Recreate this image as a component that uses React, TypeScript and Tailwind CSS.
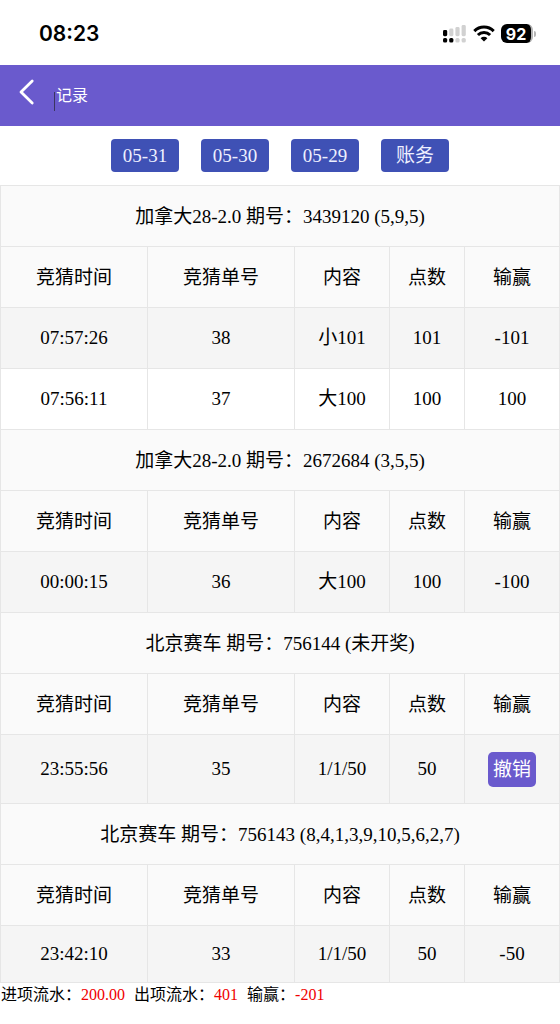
import React from 'react';

interface Bet {
  time: string;
  orderNo: string;
  content: string;
  points: string;
  result: string;
  cancellable?: boolean;
}

interface Round {
  title: string;
  bets: Bet[];
}

const filters = ['05-31', '05-30', '05-29', '账务'];

const columns = ['竞猜时间', '竞猜单号', '内容', '点数', '输赢'];

const rounds: Round[] = [
  {
    title: '加拿大28-2.0 期号：3439120 (5,9,5)',
    bets: [
      { time: '07:57:26', orderNo: '38', content: '小101', points: '101', result: '-101' },
      { time: '07:56:11', orderNo: '37', content: '大100', points: '100', result: '100' },
    ],
  },
  {
    title: '加拿大28-2.0 期号：2672684 (3,5,5)',
    bets: [{ time: '00:00:15', orderNo: '36', content: '大100', points: '100', result: '-100' }],
  },
  {
    title: '北京赛车 期号：756144 (未开奖)',
    bets: [{ time: '23:55:56', orderNo: '35', content: '1/1/50', points: '50', result: '', cancellable: true }],
  },
  {
    title: '北京赛车 期号：756143 (8,4,1,3,9,10,5,6,2,7)',
    bets: [{ time: '23:42:10', orderNo: '33', content: '1/1/50', points: '50', result: '-50' }],
  },
];

const totals = [
  { label: '进项流水：', value: '200.00' },
  { label: '出项流水：', value: '401' },
  { label: '输赢：', value: '-201' },
];

// Dual SIM signal: bars on top, dots of the second line below
const SignalIcon = () => (
  <svg width="24" height="18" viewBox="0 0 24 18" aria-hidden="true">
    <rect x="0" y="5" width="4.2" height="6.2" rx="1.4" fill="#000" />
    <rect x="6.2" y="3.6" width="4.2" height="7.6" rx="1.4" fill="#d1d1d1" />
    <rect x="12.4" y="2" width="4.2" height="9.2" rx="1.4" fill="#d1d1d1" />
    <rect x="18.6" y="0" width="4.2" height="11.2" rx="1.4" fill="#d1d1d1" />
    <rect x="0" y="13" width="4.2" height="4.6" rx="1.6" fill="#000" />
    <rect x="6.2" y="13" width="4.2" height="4.6" rx="1.6" fill="#000" />
    <rect x="12.4" y="13" width="4.2" height="4.6" rx="1.6" fill="#d1d1d1" />
    <rect x="18.6" y="13" width="4.2" height="4.6" rx="1.6" fill="#d1d1d1" />
  </svg>
);

const WifiIcon = () => (
  <svg width="22" height="17" viewBox="0 0 22 17" fill="none" stroke="#000" strokeWidth="3" aria-hidden="true">
    <path d="M1.3 6.1 A13.8 13.8 0 0 1 20.7 6.1" />
    <path d="M4.9 10 A8.6 8.6 0 0 1 17.1 10" />
    <path d="M11 16.6 L7.6 13.2 A4.8 4.8 0 0 1 14.4 13.2 Z" fill="#000" stroke="none" />
  </svg>
);

const StatusBar = () => (
  <div className="flex h-[65px] items-center justify-between bg-white pt-[2px] pr-6 pl-[39px] font-['Inter','Liberation_Sans',sans-serif]">
    <span className="text-[21px] leading-7 font-semibold text-black">08:23</span>
    <div className="flex items-center gap-[6px]">
      <SignalIcon />
      <WifiIcon />
      <div className="flex items-center gap-px">
        <span className="flex h-[19px] w-8 items-center justify-center rounded-md border-r-2 border-[#b5b5b5] bg-black text-base leading-none font-bold text-white">
          92
        </span>
        <span className="h-[6px] w-[2px] rounded-r bg-[#b5b5b5]" />
      </div>
    </div>
  </div>
);

const PageHeader = () => (
  <header className="flex h-[61px] items-center bg-[#6a5acd] pl-[19px]">
    <button type="button" aria-label="返回" className="mb-[7px] cursor-pointer">
      <svg width="16" height="26" viewBox="0 0 16 26" fill="none" stroke="#fff" strokeWidth="2.8" strokeLinecap="round" strokeLinejoin="round" aria-hidden="true">
        <path d="M13.2 2 L2 13 L13.2 24" />
      </svg>
    </button>
    <div className="ml-[19px] flex items-center">
      <span className="mt-3 h-[19px] w-px bg-[#3a3560]" />
      <h1 className="pl-px text-base leading-6 font-normal text-white">记录</h1>
    </div>
  </header>
);

const cellClass = 'border border-[#e6e6e6] p-0 font-normal';

interface BetRowProps {
  bet: Bet;
  striped: boolean;
  last: boolean;
}

const BetRow: React.FC<BetRowProps> = ({ bet, striped, last }) => (
  <tr className={`${striped ? 'bg-[#f5f5f5]' : 'bg-white'} ${bet.cancellable ? 'h-[69px]' : last ? 'h-[57px]' : 'h-[61px]'}`}>
    <td className={cellClass}>{bet.time}</td>
    <td className={cellClass}>{bet.orderNo}</td>
    <td className={cellClass}>{bet.content}</td>
    <td className={cellClass}>{bet.points}</td>
    <td className={cellClass}>
      {bet.cancellable ? (
        <button type="button" className="mx-auto block cursor-pointer rounded-[5px] bg-[#6a5acd] px-[5px] pt-1 pb-[3px] leading-7 text-white">
          撤销
        </button>
      ) : (
        bet.result
      )}
    </td>
  </tr>
);

export default function App() {
  return (
    <div className="min-h-screen bg-white font-['Liberation_Serif','Noto_Sans_CJK_SC',serif] text-black" lang="zh-CN">
      <StatusBar />
      <PageHeader />

      {/* Day filters */}
      <nav className="flex justify-center gap-[22px] py-[13px]">
        {filters.map((label) => (
          <button
            key={label}
            type="button"
            className="h-[33px] w-[68px] cursor-pointer rounded bg-[#3f51b5] text-[19px] leading-7 text-[#eef0ff]"
          >
            {label}
          </button>
        ))}
      </nav>

      {/* Records, one group per round */}
      <table className="w-full table-fixed border-collapse text-center text-[19px] leading-7">
        <colgroup>
          <col className="w-[147px]" />
          <col className="w-[147px]" />
          <col className="w-[95px]" />
          <col className="w-[75px]" />
          <col className="w-[95px]" />
        </colgroup>
        {rounds.map((round, roundIndex) => (
          <tbody key={round.title}>
            <tr className="h-[61px] bg-[#fafafa]">
              <th colSpan={5} scope="colgroup" className={`${cellClass} pt-[2px]`}>
                {round.title}
              </th>
            </tr>
            <tr className="h-[61px] bg-[#fafafa]">
              {columns.map((column) => (
                <th key={column} scope="col" className={`${cellClass} pt-[2px]`}>
                  {column}
                </th>
              ))}
            </tr>
            {round.bets.map((bet, betIndex) => (
              <BetRow key={bet.orderNo} bet={bet} striped={betIndex % 2 === 0} last={roundIndex === rounds.length - 1} />
            ))}
          </tbody>
        ))}
      </table>

      {/* Totals */}
      <div className="flex gap-[9px] pl-px text-base leading-6">
        {totals.map((item) => (
          <span key={item.label}>
            {item.label}
            <span className="text-[#f00000]">{item.value}</span>
          </span>
        ))}
      </div>
    </div>
  );
}
